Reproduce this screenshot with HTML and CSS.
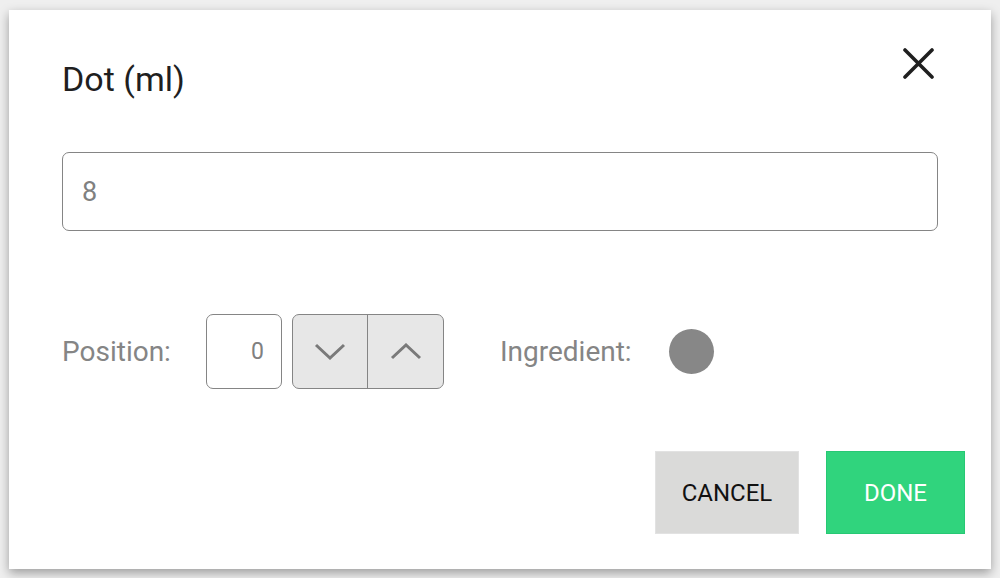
FILE: index.html
```html
<!DOCTYPE html>
<html lang="en">
<head>
  <meta charset="UTF-8">
  <title>Dot (ml)</title>
  <link rel="stylesheet" href="styles.css">
</head>
<body>
  <div class="dialog">
    <div class="dialog-header">
      <h1 class="dialog-title">Dot (ml)</h1>
      <button class="close-btn" aria-label="Close">
        <svg width="31" height="31" viewBox="0 0 31 31">
          <path d="M2 2 L29 29 M29 2 L2 29" stroke="#1f1f1f" stroke-width="3.6" stroke-linecap="round" fill="none"/>
        </svg>
      </button>
    </div>

    <input class="amount-input" type="text" value="8">

    <div class="options-row">
      <label class="option-label">Position:</label>
      <input class="position-input" type="text" value="0">
      <div class="stepper">
        <button class="step-btn" aria-label="Down">
          <svg width="32" height="17" viewBox="0 0 32 17">
            <path d="M2 2 L16 15 L30 2" stroke="#7a7a7a" stroke-width="3" fill="none"/>
          </svg>
        </button>
        <button class="step-btn" aria-label="Up">
          <svg width="32" height="17" viewBox="0 0 32 17">
            <path d="M2 15 L16 2 L30 15" stroke="#7a7a7a" stroke-width="3" fill="none"/>
          </svg>
        </button>
      </div>
      <label class="option-label ingredient-label">Ingredient:</label>
      <span class="ingredient-dot"></span>
    </div>

    <div class="dialog-footer">
      <button class="btn btn-cancel">CANCEL</button>
      <button class="btn btn-done">DONE</button>
    </div>
  </div>
</body>
</html>
```

FILE: styles.css
```css
body {
  margin: 0;
  padding: 10px 9px 9px;
  background-color: #efefef;
  font-family: Roboto, "Liberation Sans", Arial, sans-serif;
}

.dialog {
  box-sizing: border-box;
  width: 982px;
  height: 559px;
  padding: 38px 53px 0 53px;
  background-color: #ffffff;
  box-shadow: 0 4px 10px rgba(0, 0, 0, 0.35);
}

.dialog-header {
  display: flex;
  justify-content: space-between;
  align-items: flex-start;
}

.dialog-title {
  margin: 11px 0 0 0;
  font-size: 34px;
  line-height: 40px;
  font-weight: 400;
  color: #1f1f1f;
}

.close-btn {
  padding: 0;
  margin-right: 4px;
  border: none;
  background: none;
  width: 31px;
  height: 31px;
  cursor: pointer;
}

.close-btn svg {
  display: block;
}

.amount-input {
  box-sizing: border-box;
  display: block;
  width: 100%;
  height: 79px;
  margin-top: 53px;
  padding: 0 19px;
  border: 1px solid #858585;
  border-radius: 7px;
  font-family: inherit;
  font-size: 27px;
  color: #808080;
  outline: none;
}

.options-row {
  display: flex;
  align-items: center;
  height: 75px;
  margin-top: 83px;
}

.option-label {
  font-size: 28px;
  color: #858585;
}

.position-input {
  box-sizing: border-box;
  width: 76px;
  height: 75px;
  margin-left: 35px;
  padding: 0 17px;
  border: 1px solid #858585;
  border-radius: 7px;
  text-align: right;
  font-family: inherit;
  font-size: 23px;
  color: #808080;
  outline: none;
}

.stepper {
  display: flex;
  box-sizing: border-box;
  width: 152px;
  height: 75px;
  margin-left: 10px;
  border: 1px solid #858585;
  border-radius: 7px;
  background-color: #e7e7e7;
  overflow: hidden;
}

.step-btn {
  flex: 1;
  display: flex;
  justify-content: center;
  align-items: center;
  padding: 0;
  border: none;
  background: none;
  cursor: pointer;
}

.step-btn + .step-btn {
  border-left: 1px solid #858585;
}

.ingredient-label {
  margin-left: 56px;
}

.ingredient-dot {
  width: 45px;
  height: 45px;
  margin-left: 37px;
  border-radius: 50%;
  background-color: #878787;
}

.dialog-footer {
  display: flex;
  justify-content: flex-end;
  gap: 27px;
  margin-top: 62px;
  margin-right: -27px;
}

.btn {
  box-sizing: border-box;
  height: 83px;
  font-family: inherit;
  font-size: 24px;
  cursor: pointer;
}

.btn-cancel {
  width: 144px;
  border: 1px solid #e2e2e2;
  background-color: #dadad9;
  color: #111;
}

.btn-done {
  width: 139px;
  border: 1px solid #27c874;
  background-color: #30d47d;
  color: #ffffff;
}
```
